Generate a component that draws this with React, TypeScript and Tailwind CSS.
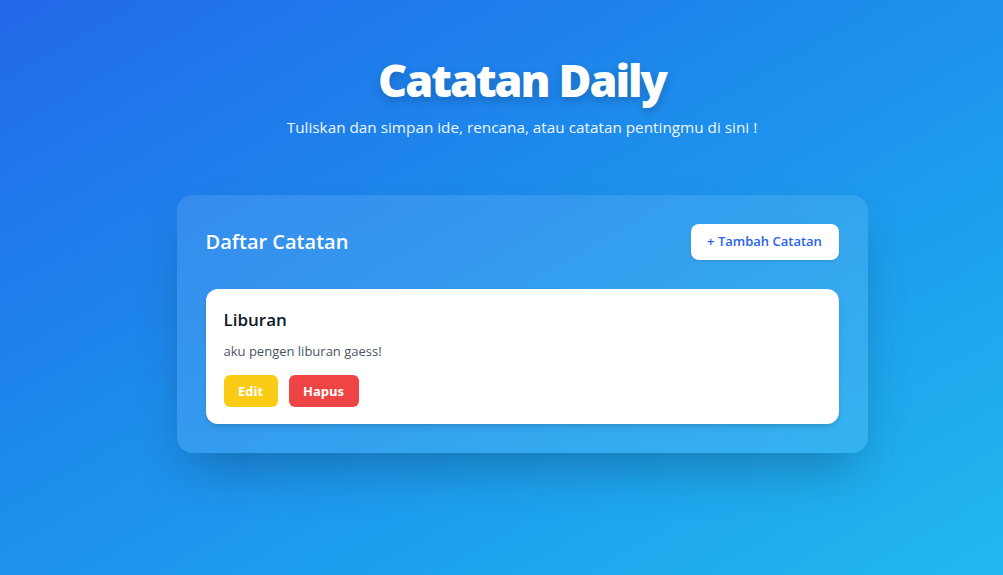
import React from 'react';

const notes = [{ id: 1, title: 'Liburan', body: 'aku pengen liburan gaess!' }];

export default function App() {
  return (
    <div
      className="min-h-screen w-full bg-gradient-to-br from-[#2368e9] to-[#22b8ee] flex flex-col items-center pt-14 pl-[41px]"
      style={{ fontFamily: '"Open Sans", "Noto Sans", sans-serif' }}
    >
      {/* Header */}
      <h1 className="text-[45px] font-extrabold text-white leading-[48px] tracking-[-0.045em] [text-shadow:0_4px_10px_rgba(0,0,0,0.2)]">
        Catatan Daily
      </h1>
      <p className="mt-[12px] text-[15.3px] text-blue-50">
        Tuliskan dan simpan ide, rencana, atau catatan pentingmu di sini !
      </p>

      {/* Card */}
      <div className="mt-[56px] w-[691px] rounded-2xl bg-white/10 p-[29px] shadow-2xl">
        <div className="flex items-center justify-between">
          <h2 className="text-[20px] font-semibold text-white">Daftar Catatan</h2>
          <button className="h-9 w-[148px] rounded-lg bg-white text-[13px] font-semibold text-[#2563eb] shadow">
            + Tambah Catatan
          </button>
        </div>

        <div className="mt-[29px] space-y-4">
          {notes.map(n => (
            <div key={n.id} className="rounded-xl bg-white px-[18px] pt-[19px] pb-[17px] shadow-md">
              <h3 className="text-[17px] font-semibold text-gray-900 leading-6">{n.title}</h3>
              <p className="mt-[10px] text-[13px] text-gray-600">{n.body}</p>
              <div className="mt-[14px] flex gap-[11px]">
                <button className="h-8 w-[54px] rounded-md bg-[#facc15] text-[13px] font-bold text-white">Edit</button>
                <button className="h-8 w-[70px] rounded-md bg-[#ef4444] text-[13px] font-bold text-white">Hapus</button>
              </div>
            </div>
          ))}
        </div>
      </div>
    </div>
  );
}
